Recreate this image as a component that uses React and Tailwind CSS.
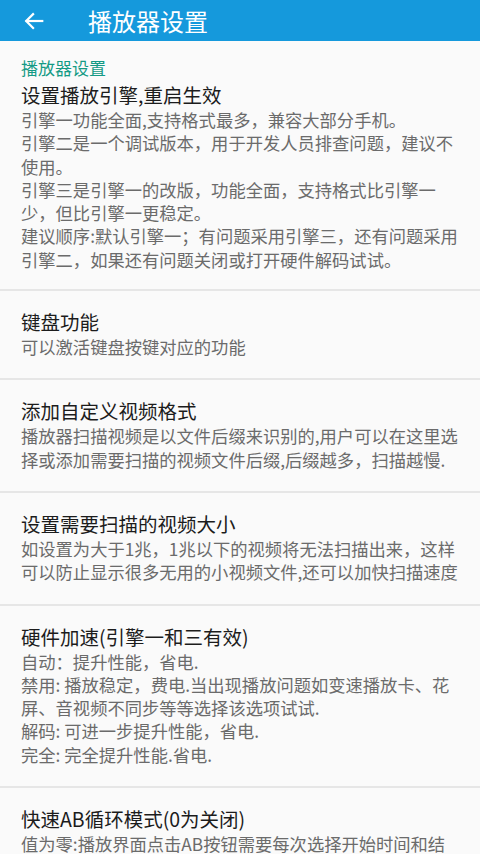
import React from "react";

const font = { fontFamily: '"Noto Sans CJK SC", "Noto Sans", sans-serif' };

// 设置项数据，每一行按截图中的折行拆开
const items = [
  {
    title: "键盘功能",
    lines: ["可以激活键盘按键对应的功能"],
  },
  {
    title: "添加自定义视频格式",
    lines: [
      "播放器扫描视频是以文件后缀来识别的,用户可以在这里选",
      "择或添加需要扫描的视频文件后缀,后缀越多，扫描越慢.",
    ],
  },
  {
    title: "设置需要扫描的视频大小",
    lines: [
      "如设置为大于1兆，1兆以下的视频将无法扫描出来，这样",
      "可以防止显示很多无用的小视频文件,还可以加快扫描速度",
    ],
  },
  {
    title: "硬件加速(引擎一和三有效)",
    lines: [
      "自动：提升性能，省电.",
      "禁用: 播放稳定，费电.当出现播放问题如变速播放卡、花",
      "屏、音视频不同步等等选择该选项试试.",
      "解码: 可进一步提升性能，省电.",
      "完全: 完全提升性能.省电.",
    ],
  },
  {
    title: "快速AB循环模式(0为关闭)",
    lines: ["值为零:播放界面点击AB按钮需要每次选择开始时间和结"],
  },
];

const engineLines = [
  "引擎一功能全面,支持格式最多，兼容大部分手机。",
  "引擎二是一个调试版本，用于开发人员排查问题，建议不",
  "使用。",
  "引擎三是引擎一的改版，功能全面，支持格式比引擎一",
  "少，但比引擎一更稳定。",
  "建议顺序:默认引擎一；有问题采用引擎三，还有问题采用",
  "引擎二，如果还有问题关闭或打开硬件解码试试。",
];

const Summary = ({ lines }) => (
  <div className="text-[17.3px] leading-[23.3px] text-[#6b6b6b]">
    {lines.map((l, i) => (
      <div key={i} className="whitespace-nowrap">
        {l}
      </div>
    ))}
  </div>
);

const PrefItem = ({ title, lines }) => (
  <div className="border-t-2 border-[#e6e6e6] pl-[21px] pr-4 pt-[18px] pb-5">
    <div className="text-[19.5px] leading-[26px] text-[#1c1c1c]">{title}</div>
    <Summary lines={lines} />
  </div>
);

export default function App() {
  return (
    <div className="w-[480px] h-[854px] overflow-hidden bg-[#fafafa]" style={font}>
      {/* 顶部标题栏 */}
      <div className="h-[41px] bg-[#1599dc] flex items-center">
        <svg
          className="ml-[23px]"
          width="22"
          height="22"
          viewBox="0 0 24 24"
          fill="none"
          stroke="white"
          strokeWidth="2.4"
          strokeLinecap="square"
        >
          <path d="M21 12H4" />
          <path d="M11 4.5L3.5 12l7.5 7.5" />
        </svg>
        <div className="ml-[43px] text-[24px] text-white leading-none">播放器设置</div>
      </div>

      {/* 分类标题 */}
      <div className="pl-[21px] pr-4 pt-[16px] pb-[18px]">
        <div className="text-[17px] leading-[22px] text-[#149a85]">播放器设置</div>
        <div className="mt-[3px] text-[19.5px] leading-[26px] text-[#1c1c1c]">
          设置播放引擎,重启生效
        </div>
        <Summary lines={engineLines} />
      </div>

      {items.map((it) => (
        <PrefItem key={it.title} title={it.title} lines={it.lines} />
      ))}
    </div>
  );
}
